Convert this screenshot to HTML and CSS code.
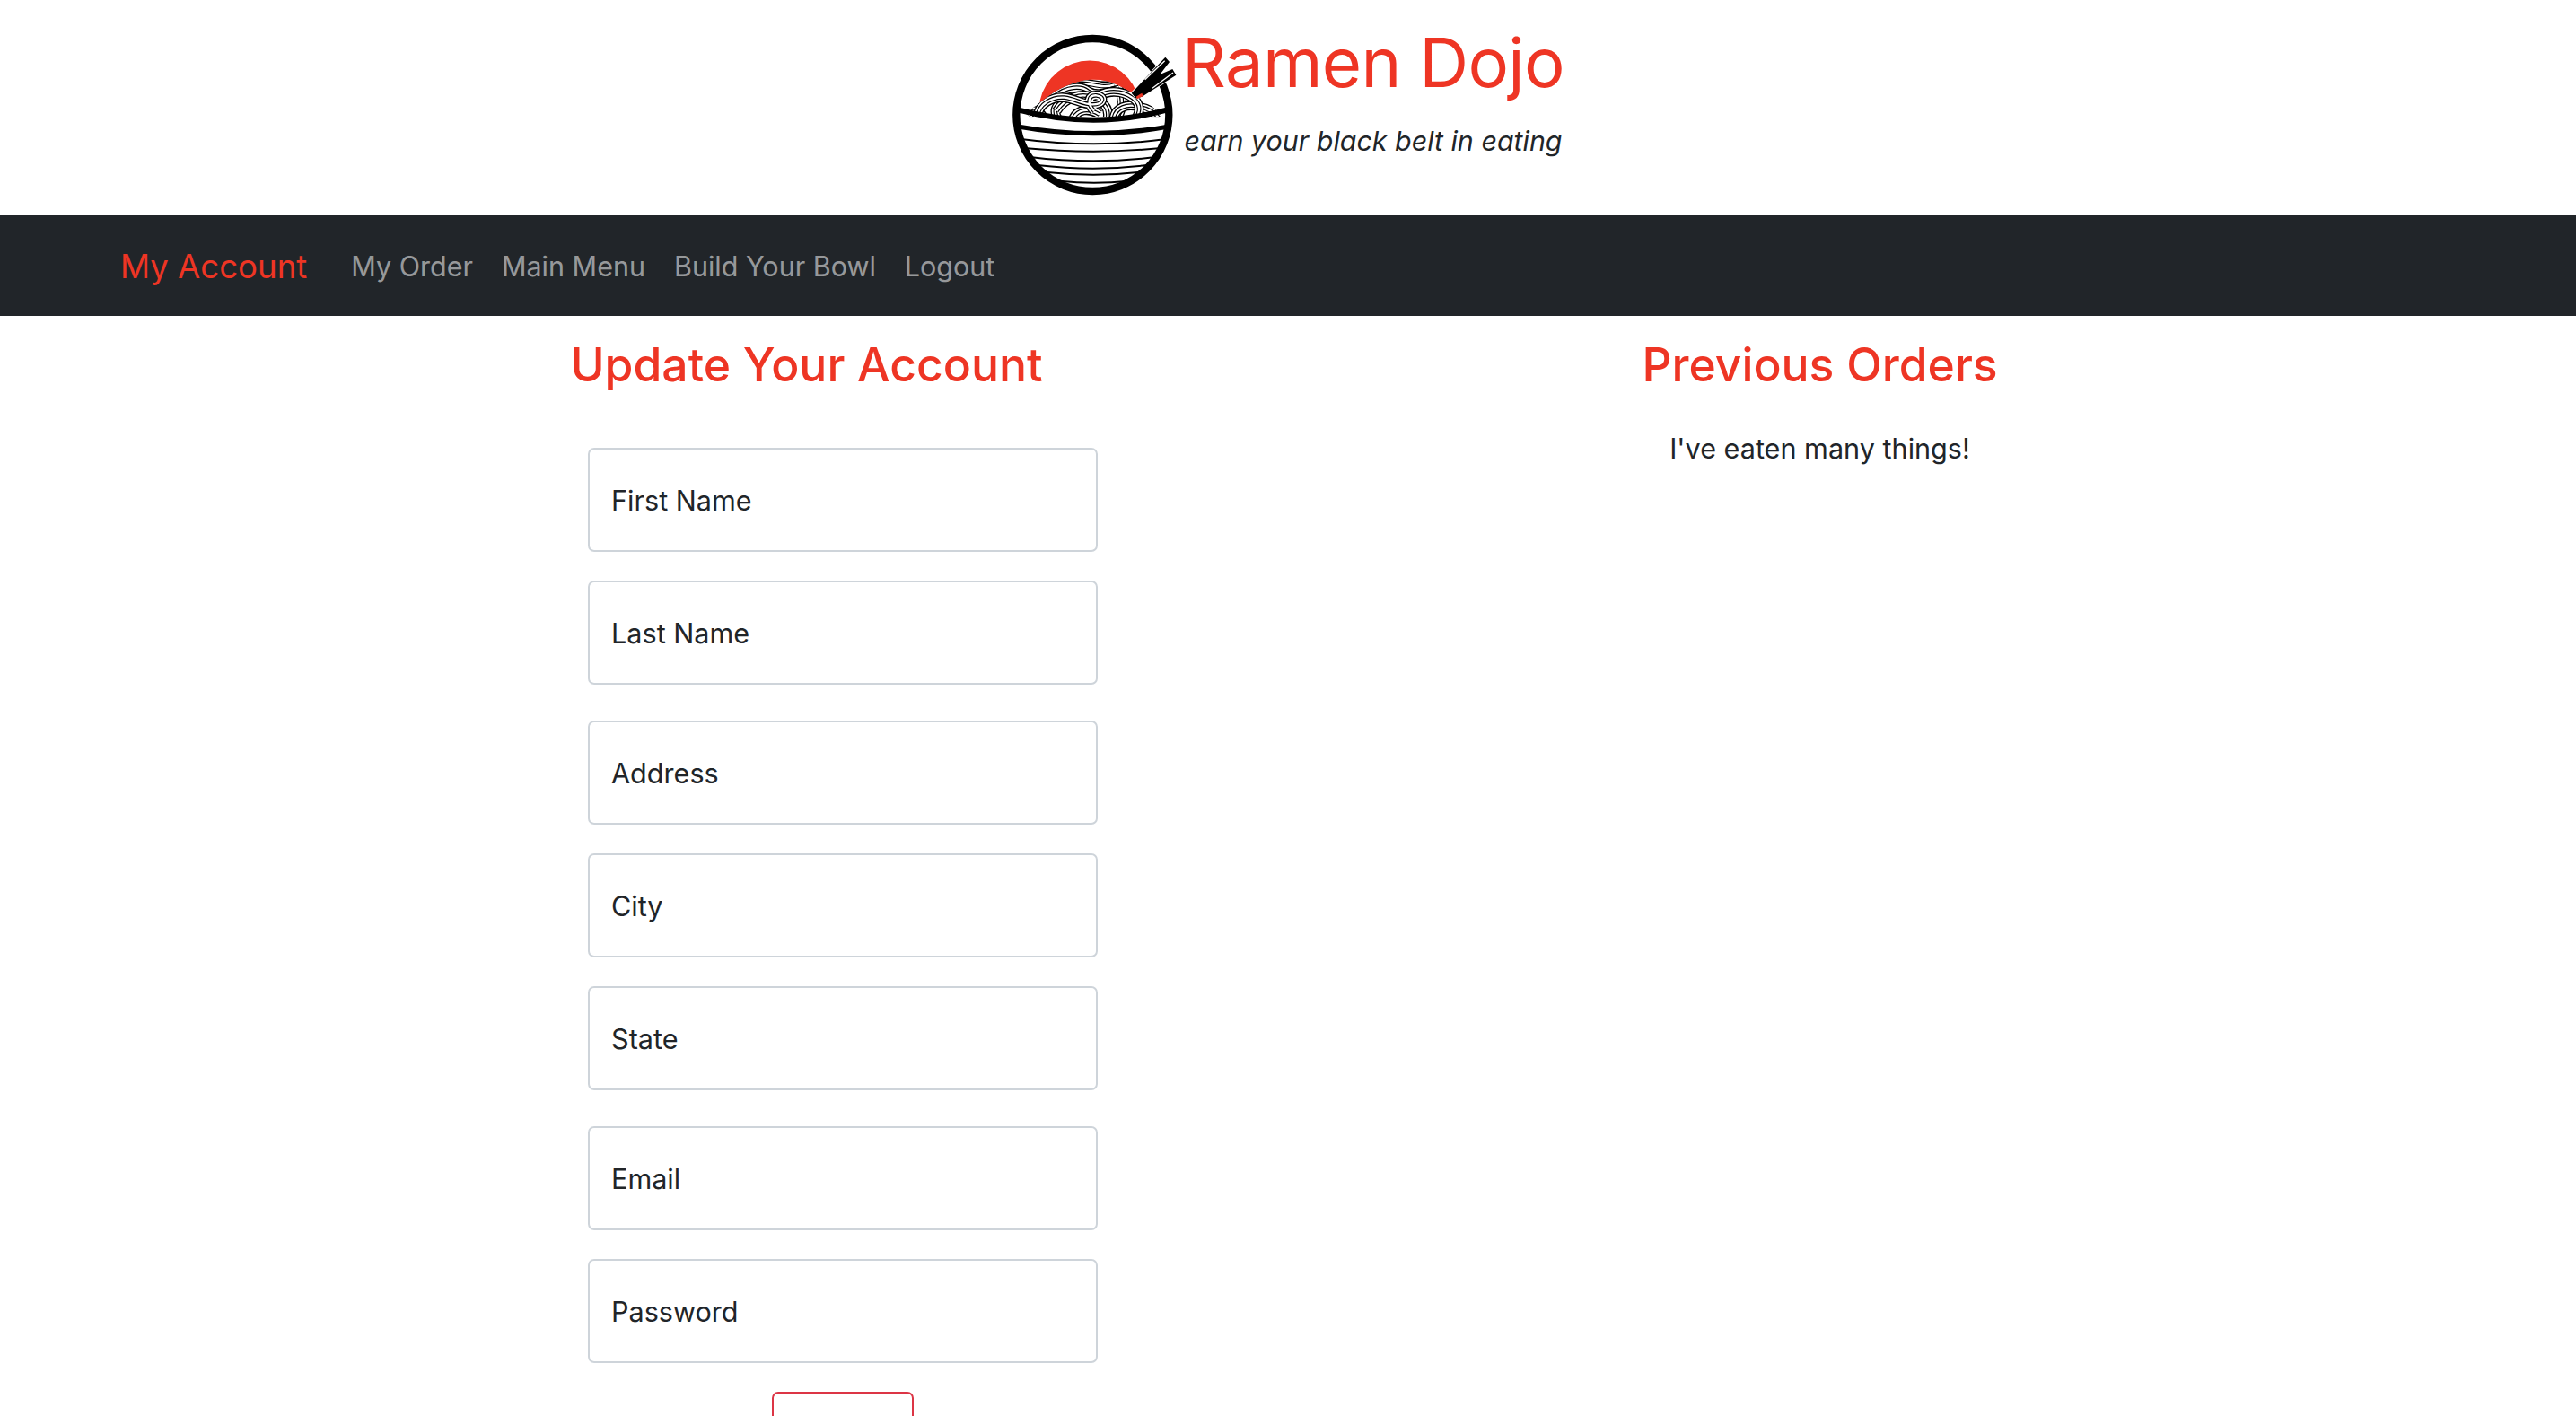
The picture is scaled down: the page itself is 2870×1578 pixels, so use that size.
FILE: index.html
```html
<!DOCTYPE html>
<html lang="en">
<head>
    <meta charset="UTF-8">
    <meta name="viewport" content="width=device-width, initial-scale=1.0">
    <title>Ramen Dojo - My Account</title>
    <link rel="stylesheet" href="styles.css">
</head>
<body>
    <header class="site-header">
        <svg class="logo" viewBox="84 50 552 546" aria-label="Ramen Dojo logo">
            <defs>
                <clipPath id="mound-clip">
                    <path d="M125 330 C150 300 175 285 205 262 C240 235 290 212 345 205 C400 200 440 222 480 245 C520 268 560 295 590 330 Z"/>
                </clipPath>
                <clipPath id="bowl-clip">
                    <circle cx="355" cy="323" r="260"/>
                </clipPath>
                <path id="n1" d="M170 330 C175 285 220 262 260 265 C300 270 320 288 355 288 C392 288 398 262 368 258 C340 256 335 285 360 310"/>
                <path id="n2" d="M235 310 C265 262 320 250 352 264 C388 280 412 295 405 335"/>
                <path id="n3" d="M225 262 C270 226 318 226 340 244 C365 262 400 250 445 238"/>
                <path id="n4" d="M285 222 C335 206 380 240 428 222"/>
                <path id="n5" d="M378 258 C420 236 470 246 500 276 C516 296 512 312 500 335"/>
                <path id="n6" d="M425 335 C432 298 470 285 510 296 C540 302 560 312 575 332"/>
                <path id="n7" d="M238 335 C224 312 228 290 262 276"/>
                <path id="n8" d="M290 335 C305 305 340 298 378 322"/>
                <path id="n9" d="M140 325 C155 303 172 305 190 330"/>
                <path id="n10" d="M442 238 C460 270 454 302 438 335"/>
            </defs>
            <!-- sun -->
            <path d="M179 275 A170 170 0 0 1 511 275 L511 300 L179 300 Z" fill="#ee3524"/>
            <!-- noodles, each one is a three strand ribbon -->
            <g clip-path="url(#mound-clip)" fill="none">
                <path d="M125 330 C150 300 175 285 205 262 C240 235 290 212 345 205 C400 200 440 222 480 245 C520 268 560 295 590 330 Z" fill="#fff"/>
                <use href="#n4" class="strand-a"/><use href="#n4" class="strand-b"/><use href="#n4" class="strand-c"/><use href="#n4" class="strand-d"/>
                <use href="#n3" class="strand-a"/><use href="#n3" class="strand-b"/><use href="#n3" class="strand-c"/><use href="#n3" class="strand-d"/>
                <use href="#n9" class="strand-a"/><use href="#n9" class="strand-b"/><use href="#n9" class="strand-c"/><use href="#n9" class="strand-d"/>
                <use href="#n10" class="strand-a"/><use href="#n10" class="strand-b"/><use href="#n10" class="strand-c"/><use href="#n10" class="strand-d"/>
                <use href="#n7" class="strand-a"/><use href="#n7" class="strand-b"/><use href="#n7" class="strand-c"/><use href="#n7" class="strand-d"/>
                <use href="#n2" class="strand-a"/><use href="#n2" class="strand-b"/><use href="#n2" class="strand-c"/><use href="#n2" class="strand-d"/>
                <use href="#n8" class="strand-a"/><use href="#n8" class="strand-b"/><use href="#n8" class="strand-c"/><use href="#n8" class="strand-d"/>
                <use href="#n6" class="strand-a"/><use href="#n6" class="strand-b"/><use href="#n6" class="strand-c"/><use href="#n6" class="strand-d"/>
                <use href="#n5" class="strand-a"/><use href="#n5" class="strand-b"/><use href="#n5" class="strand-c"/><use href="#n5" class="strand-d"/>
                <use href="#n1" class="strand-a"/><use href="#n1" class="strand-b"/><use href="#n1" class="strand-c"/><use href="#n1" class="strand-d"/>
            </g>
            <!-- bowl -->
            <g clip-path="url(#bowl-clip)" fill="none" stroke="#000">
                <path d="M105 306 Q360 374 605 306" stroke-width="18"/>
                <path d="M105 362 Q360 408 610 362" stroke-width="16"/>
                <path d="M115 404 Q360 436 600 404" stroke-width="6"/>
                <path d="M125 434 Q360 456 585 434" stroke-width="6"/>
                <path d="M145 464 Q360 490 565 464" stroke-width="6"/>
                <path d="M170 491 Q360 513 535 491" stroke-width="6"/>
                <path d="M195 514 Q360 532 515 514" stroke-width="6"/>
                <path d="M245 544 Q360 556 475 544" stroke-width="6"/>
            </g>
            <circle cx="355" cy="323" r="255" fill="none" stroke="#000" stroke-width="25"/>
            <!-- chopsticks lie over the rim -->
            <path d="M485 250 L598 130 L612 146 L580 188 L622 170 L634 190 L520 262 L500 268 Z" fill="#000" stroke="#fff" stroke-width="5" paint-order="stroke"/>
            <path d="M530 205 L596 142" stroke="#fff" stroke-width="4" fill="none"/>
            <path d="M555 234 L624 182" stroke="#fff" stroke-width="4" fill="none"/>
            <path d="M500 262 L520 250 L524 260 L504 270 Z" fill="#ee3524"/>
        </svg>
        <div class="brand-text">
            <h1>Ramen Dojo</h1>
            <p>earn your black belt in eating</p>
        </div>
    </header>

    <nav class="navbar">
        <a class="navbar-brand" href="#">My Account</a>
        <ul class="nav-links">
            <li><a href="#">My Order</a></li>
            <li><a href="#">Main Menu</a></li>
            <li><a href="#">Build Your Bowl</a></li>
            <li><a href="#">Logout</a></li>
        </ul>
    </nav>

    <main class="columns">
        <section class="column">
            <h2>Update Your Account</h2>
            <form class="account-form">
                <div class="form-group">
                    <input type="text" placeholder="First Name">
                    <input type="text" placeholder="Last Name">
                </div>
                <div class="form-group">
                    <input type="text" placeholder="Address">
                    <input type="text" placeholder="City">
                    <input type="text" placeholder="State">
                </div>
                <div class="form-group">
                    <input type="email" placeholder="Email">
                    <input type="password" placeholder="Password">
                </div>
                <button type="submit" class="btn-update">Update</button>
            </form>
        </section>
        <section class="column">
            <h2>Previous Orders</h2>
            <p class="orders-text">I've eaten many things!</p>
        </section>
    </main>
</body>
</html>
```
FILE: styles.css
```css
:root {
    --ramen-red: #ee3524;
    --dark-text: #212529;
    --field-border: #ced4da;
}

* {
    margin: 0;
    padding: 0;
    box-sizing: border-box;
}

html, body {
    height: 100%;
    overflow: hidden;
}

body {
    background-color: #fff;
    color: var(--dark-text);
    font-family: Inter, "Liberation Sans", sans-serif;
    font-size: 30.6px;
    line-height: 1.5;
}

.site-header {
    height: 240px;
    display: flex;
    justify-content: center;
    padding-top: 37px;
}

.logo {
    width: 184px;
    height: 182px;
    margin-right: 6px;
}

.strand-a { stroke: #000; stroke-width: 32; }
.strand-b { stroke: #fff; stroke-width: 24; }
.strand-c { stroke: #000; stroke-width: 14; }
.strand-d { stroke: #fff; stroke-width: 7; }

.brand-text {
    text-align: center;
    margin-top: -6px;
}

.brand-text h1 {
    color: var(--ramen-red);
    font-size: 76px;
    font-weight: 400;
    letter-spacing: -0.7px;
    line-height: 1.2;
    margin-top: -7px;
}

.brand-text p {
    font-size: 30.4px;
    font-style: italic;
    margin-top: 20px;
}

.navbar {
    height: 112px;
    background-color: #212529;
    display: flex;
    align-items: center;
    padding: 2px 0 0 134px;
}

.navbar a {
    text-decoration: none;
}

.navbar-brand {
    color: var(--ramen-red);
    font-size: 36.6px;
    margin-right: 49px;
}

.nav-links {
    display: flex;
    gap: 32px;
    list-style: none;
    font-size: 30.5px;
}

.nav-links a {
    color: rgba(255, 255, 255, 0.55);
}

.columns {
    display: flex;
    padding-left: 335px;
}

.column {
    width: 1127px;
    text-align: center;
}

.column + .column {
    margin-left: 2px;
}

.column h2 {
    color: var(--ramen-red);
    font-size: 51.6px;
    font-weight: 500;
    line-height: 1.2;
    margin-top: 24px;
}

.account-form {
    width: 568px;
    margin: 61px 0 0 320px;
}

.form-group {
    margin-bottom: 32px;
}

.form-group + .form-group {
    margin-top: 40px;
}

.form-group input {
    display: block;
    width: 100%;
    height: 116px;
    margin-bottom: 32px;
    padding: 2px 24px 0;
    border: 2px solid var(--field-border);
    border-radius: 7px;
    font-family: inherit;
    font-size: 30.6px;
    color: var(--dark-text);
}

.form-group input:last-child {
    margin-bottom: 0;
}

.form-group input::placeholder {
    color: var(--dark-text);
    opacity: 1;
}

.btn-update {
    display: block;
    width: 158px;
    height: 84px;
    margin: 0 auto;
    background-color: #fff;
    border: 2px solid #dc3545;
    border-radius: 7px;
    color: #dc3545;
    font-family: inherit;
    font-size: 29.3px;
}

.orders-text {
    margin-top: 39px;
}
```
